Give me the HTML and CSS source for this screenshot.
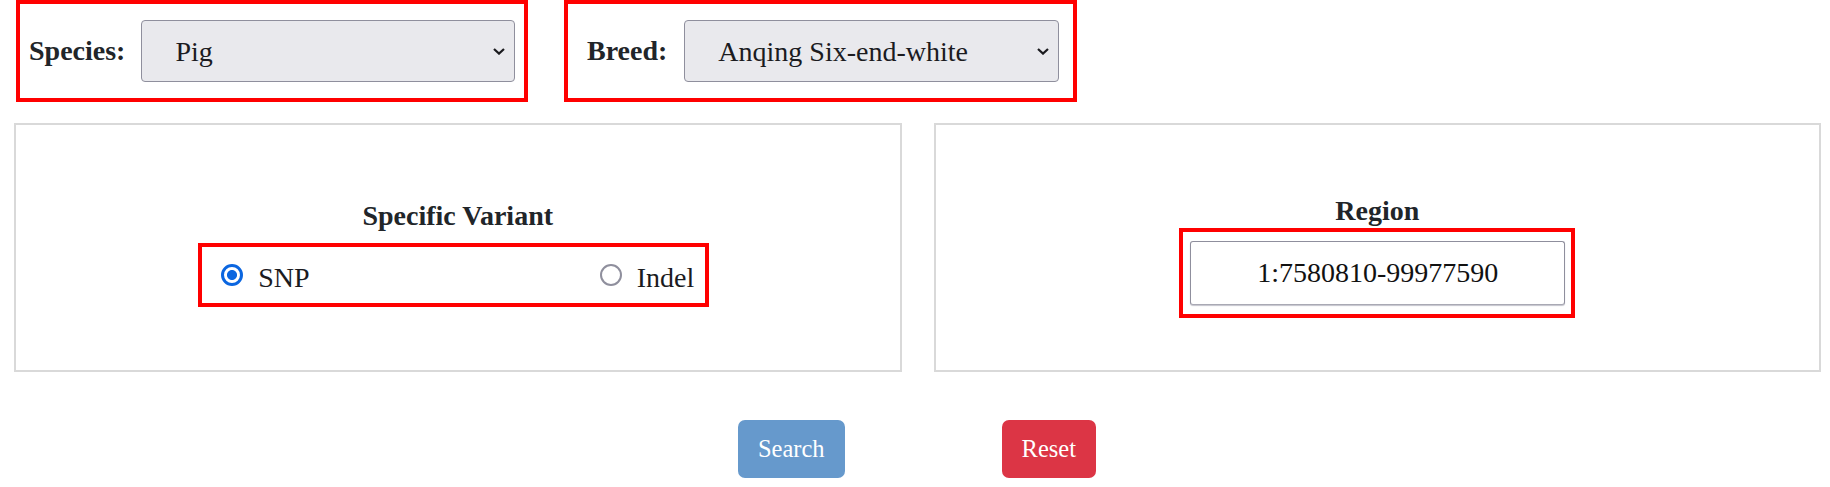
FILE: index.html
```html
<!DOCTYPE html>
<html lang="en">
<head>
    <meta charset="UTF-8">
    <meta name="viewport" content="width=device-width, initial-scale=1.0">
    <title>Variant Search</title>
    <link rel="stylesheet" href="styles.css">
</head>
<body>
    <form class="search-form" id="searchForm">
        <div class="top-row">
            <div class="field-box species-box">
                <label for="species">Species:</label>
                <span class="select-wrap">
                    <select id="species" name="species">
                        <option>Pig</option>
                    </select>
                    <svg class="chevron" width="12" height="7" viewBox="0 0 12 7"><path d="M1 1l5 4.6L11 1" fill="none" stroke="#1b1b1f" stroke-width="2.2"/></svg>
                </span>
            </div>
            <div class="field-box breed-box">
                <label for="breed">Breed:</label>
                <span class="select-wrap">
                    <select id="breed" name="breed">
                        <option>Anqing Six-end-white</option>
                    </select>
                    <svg class="chevron" width="12" height="7" viewBox="0 0 12 7"><path d="M1 1l5 4.6L11 1" fill="none" stroke="#1b1b1f" stroke-width="2.2"/></svg>
                </span>
            </div>
        </div>

        <div class="panels">
            <div class="panel variant-panel">
                <h3>Specific Variant</h3>
                <div class="radio-group">
                    <label class="radio-item"><input type="radio" name="variant" value="snp" checked><span>SNP</span></label>
                    <label class="radio-item"><input type="radio" name="variant" value="indel"><span>Indel</span></label>
                </div>
            </div>
            <div class="panel region-panel">
                <h3>Region</h3>
                <div class="region-box">
                    <input type="text" id="region" name="region" value="1:7580810-99977590">
                </div>
            </div>
        </div>

        <div class="actions">
            <button type="submit" class="btn search-btn">Search</button>
            <button type="reset" class="btn reset-btn">Reset</button>
        </div>
    </form>
</body>
</html>
```

FILE: styles.css
```css
body {
    margin: 0;
    font-family: "Liberation Serif", "Times New Roman", serif;
    color: #212529;
    background: #fff;
}

.top-row {
    display: flex;
    gap: 36px;
    padding-left: 16px;
}

.field-box {
    box-sizing: border-box;
    height: 102px;
    width: 512px;
    border: 4px solid #ff0000;
    display: flex;
    align-items: center;
    padding: 0 9px;
}

.breed-box {
    width: 513px;
    padding-left: 19px;
}

.field-box label {
    font-size: 28px;
    font-weight: bold;
    margin-right: 16px;
}

.breed-box label {
    margin-right: 17px;
}

.select-wrap {
    position: relative;
    display: block;
}

.select-wrap select {
    appearance: none;
    box-sizing: border-box;
    width: 374px;
    height: 62px;
    padding: 0 40px 0 33px;
    font-family: "Liberation Serif", "Times New Roman", serif;
    font-size: 28px;
    color: #1b1b1f;
    background-color: #e9e9ed;
    border: 1px solid #8f8f9d;
    border-radius: 4px;
}

.breed-box select {
    width: 375px;
}

.chevron {
    position: absolute;
    right: 10px;
    top: 28px;
    pointer-events: none;
}

.panels {
    display: flex;
    gap: 32px;
    margin-top: 21px;
    padding: 0 9px 0 14px;
}

.panel {
    flex: 1;
    box-sizing: border-box;
    height: 249px;
    border: 2px solid #d9d9d9;
    display: flex;
    flex-direction: column;
    align-items: center;
}

.panel h3 {
    margin: 0;
    font-size: 28px;
    line-height: 32px;
}

.variant-panel {
    padding-top: 75px;
}

.variant-panel h3 {
    margin-bottom: 11px;
}

.region-panel {
    padding-top: 70px;
}

.region-panel h3 {
    margin-bottom: 1px;
}

.radio-group {
    box-sizing: border-box;
    width: 511px;
    height: 64px;
    margin-right: 8px;
    border: 4px solid #ff0000;
    display: flex;
    align-items: center;
    justify-content: space-between;
    padding: 0 11px 0 19px;
}

.radio-item {
    display: flex;
    align-items: center;
    font-size: 28px;
    line-height: 32px;
    color: #1b1b1f;
}

.radio-item span {
    padding-top: 6px;
}

.radio-item input {
    appearance: none;
    box-sizing: border-box;
    width: 22px;
    height: 22px;
    margin: 0 15px 0 0;
    border: 2px solid #8f8f9d;
    border-radius: 50%;
    background: #fff;
}

.radio-item input:checked {
    border: 3px solid #0b66e0;
    background: radial-gradient(circle, #0b66e0 0 4.6px, #fff 5.4px);
}

.region-box {
    box-sizing: border-box;
    width: 396px;
    height: 90px;
    border: 4px solid #ff0000;
    padding: 9px 6px 9px 7px;
}

.region-box input {
    box-sizing: border-box;
    width: 375px;
    height: 64px;
    font-family: "Liberation Serif", "Times New Roman", serif;
    font-size: 28px;
    color: #111;
    text-align: center;
    border: 1px solid #8f8f9d;
    border-bottom-color: #a9a9b4;
    border-radius: 3px;
    box-shadow: 0 1px 1px #c4c4cc;
    outline: none;
}

.actions {
    display: flex;
    justify-content: center;
    gap: 157px;
    margin-top: 48px;
    padding-left: 4px;
}

.btn {
    height: 58px;
    padding: 0 20px;
    border: none;
    border-radius: 7px;
    color: #fff;
    font-family: "Liberation Serif", "Times New Roman", serif;
    font-size: 24.5px;
    cursor: pointer;
}

.search-btn {
    background-color: #6699cc;
}

.reset-btn {
    background-color: #dc3545;
}
```
